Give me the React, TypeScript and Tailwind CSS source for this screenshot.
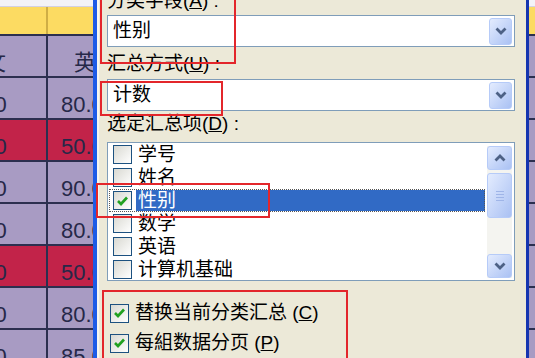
import React from "react";

const sheetRows = [
  { a: "语文", b: "英语", red: false, head: true },
  { a: "90.0", b: "80.0", red: false },
  { a: "70.0", b: "50.0", red: true },
  { a: "80.0", b: "90.0", red: false },
  { a: "60.0", b: "80.0", red: false },
  { a: "90.0", b: "50.0", red: true },
  { a: "70.0", b: "80.0", red: false },
  { a: "80.0", b: "85.0", red: false },
];

const fields = ["学号", "姓名", "性别", "数学", "英语", "计算机基础"];

function Chevron({ up = false }: { up?: boolean }) {
  return (
    <svg width="12" height="8" viewBox="0 0 12 8">
      <path
        d={up ? "M1.5 6.5 L6 2 L10.5 6.5" : "M1.5 1.5 L6 6 L10.5 1.5"}
        fill="none"
        stroke="#4d6185"
        strokeWidth="2.8"
      />
    </svg>
  );
}

function XpButton({ className, children }: { className: string; children?: React.ReactNode }) {
  return (
    <div
      className={`flex shrink-0 items-center justify-center rounded-[3px] border border-[#b6cbf8] bg-linear-to-br from-[#e4ecfe] to-[#aac1f3] ${className}`}
    >
      {children}
    </div>
  );
}

function Checkbox({ checked, className = "" }: { checked: boolean; className?: string }) {
  return (
    <div
      className={`flex h-[19px] w-[19px] shrink-0 items-center justify-center border border-[#1c5180] bg-linear-to-br from-[#d9d9d2] to-white ${className}`}
    >
      {checked && (
        <svg width="13" height="12" viewBox="0 0 13 12">
          <path d="M2 6 L5 9 L11 2.5" fill="none" stroke="#21a121" strokeWidth="2.6" />
        </svg>
      )}
    </div>
  );
}

function Sheet() {
  return (
    <div className="flex w-[93px] shrink-0 flex-col font-['Liberation_Sans','Noto_Sans_CJK_SC',sans-serif] text-[22px] text-[#262848]">
      <div className="h-[7px] shrink-0 border-b border-[#d3d1e2] bg-[#f3f3f7]" />
      <div className="flex h-[29px] shrink-0 border-b-2 border-[#2c2f4f] bg-[#fcdb62]">
        <div className="w-[48px] border-r-2 border-[#cfae45]" />
      </div>
      {sheetRows.map((r, i) => (
        <div
          key={i}
          className={`flex h-[42px] shrink-0 border-b-2 border-[#2c2f4f] ${r.red ? "bg-[#c22349]" : "bg-[#a89bc3]"}`}
        >
          <div className="flex w-[48px] items-end overflow-hidden border-r-2 border-[#2c2f4f] pb-[1px]">
            <span className={`shrink-0 whitespace-nowrap leading-[24px] ${r.head ? "ml-[-38px]" : "ml-[-36px]"}`}>
              {r.a}
            </span>
          </div>
          <div className="flex flex-1 items-end overflow-hidden pb-[1px]">
            <span className={`shrink-0 whitespace-nowrap leading-[24px] ${r.head ? "pl-[26px]" : "pl-[13px]"}`}>
              {r.b}
            </span>
          </div>
        </div>
      ))}
    </div>
  );
}

function RightSheet() {
  return (
    <div className="flex w-[6px] shrink-0 flex-col">
      <div className="h-[7px] shrink-0 border-b border-[#d3d1e2] bg-[#f3f3f7]" />
      <div className="h-[29px] shrink-0 border-b-2 border-[#2c2f4f] bg-[#fcdb62]" />
      {sheetRows.map((_, i) => (
        <div key={i} className="h-[42px] shrink-0 border-b-2 border-[#2c2f4f] bg-[#a89bc3]" />
      ))}
    </div>
  );
}

export default function App() {
  return (
    <div className="relative flex h-[358px] w-[535px] overflow-hidden bg-[#ece9d8]">
      <Sheet />

      <div className="w-[4px] shrink-0 bg-[#1d5be6]" />
      <div className="w-[2px] shrink-0 bg-[#f7f6f0]" />

      <div className="flex w-[427px] shrink-0 flex-col bg-[#ece9d8] pl-[8px] pr-[11px] font-['Liberation_Sans','Noto_Sans_CJK_SC',sans-serif] text-[19px] text-black">
        <div className="-mt-[10px] h-[22px] shrink-0 whitespace-nowrap leading-[22px]">
          分类字段(<span className="underline">A</span>) :
        </div>
        <div className="mt-[3px] flex h-[32px] shrink-0 items-center border border-[#7f9db9] bg-white">
          <span className="flex-1 pl-[5px] leading-[22px]">性别</span>
          <XpButton className="mr-[2px] h-[27px] w-[23px]">
            <Chevron />
          </XpButton>
        </div>

        <div className="mt-[6px] h-[22px] shrink-0 whitespace-nowrap leading-[22px]">
          汇总方式(<span className="underline">U</span>) :
        </div>
        <div className="mt-[4px] flex h-[32px] shrink-0 items-center border border-[#7f9db9] bg-white">
          <span className="flex-1 pl-[5px] leading-[22px]">计数</span>
          <XpButton className="mr-[2px] h-[27px] w-[23px]">
            <Chevron />
          </XpButton>
        </div>

        <div className="mt-[2px] h-[22px] shrink-0 whitespace-nowrap leading-[22px]">
          选定汇总项(<span className="underline">D</span>) :
        </div>
        <div className="mt-[7px] flex h-[139px] shrink-0 border border-[#7f9db9] bg-white">
          <div className="flex flex-1 flex-col pl-[1px] pr-[2px]">
            {fields.map((f) => {
              const sel = f === "性别";
              return (
                <div
                  key={f}
                  className={`flex h-[23px] shrink-0 items-center pl-[4px] ${sel ? "outline-1 -outline-offset-1 outline-dotted outline-[#555]" : ""}`}
                >
                  <Checkbox checked={sel} className="mr-[4px]" />
                  <span
                    className={`flex h-[21px] flex-1 items-center px-[2px] leading-[21px] ${sel ? "bg-[#316ac5] text-white" : ""}`}
                  >
                    {f}
                  </span>
                </div>
              );
            })}
          </div>
          <div className="mb-[2px] mr-[2px] mt-[3px] flex w-[25px] flex-col bg-[#f4f4f0]">
            <XpButton className="h-[24px] w-[25px]">
              <Chevron up />
            </XpButton>
            <XpButton className="mt-[3px] h-[45px] w-[25px] flex-col gap-[2px]">
              <div className="h-[1px] w-[8px] bg-[#9fb5e8]" />
              <div className="h-[1px] w-[8px] bg-[#9fb5e8]" />
              <div className="h-[1px] w-[8px] bg-[#9fb5e8]" />
              <div className="h-[1px] w-[8px] bg-[#9fb5e8]" />
            </XpButton>
            <div className="flex-1" />
            <XpButton className="h-[24px] w-[25px]">
              <Chevron />
            </XpButton>
          </div>
        </div>

        <div className="mt-[17px] flex h-[30px] shrink-0 items-center pl-[3px]">
          <Checkbox checked className="mr-[6px]" />
          <span className="whitespace-nowrap leading-[22px]">
            替换当前分类汇总 (<span className="underline">C</span>)
          </span>
        </div>
        <div className="flex h-[30px] shrink-0 items-center pl-[3px]">
          <Checkbox checked className="mr-[6px]" />
          <span className="whitespace-nowrap leading-[22px]">
            每組数据分页 (<span className="underline">P</span>)
          </span>
        </div>
      </div>

      <div className="w-[3px] shrink-0 bg-[#1535b0]" />
      <RightSheet />

      <div className="pointer-events-none absolute left-[100px] top-[-5px] h-[69px] w-[136px] border-2 border-[#e3262b]" />
      <div className="pointer-events-none absolute left-[100px] top-[81px] h-[35px] w-[123px] border-2 border-[#e3262b]" />
      <div className="pointer-events-none absolute left-[96px] top-[183px] h-[35px] w-[174px] border-2 border-[#e3262b]" />
      <div className="pointer-events-none absolute left-[102px] top-[290px] h-[90px] w-[246px] border-2 border-[#e3262b]" />
    </div>
  );
}
